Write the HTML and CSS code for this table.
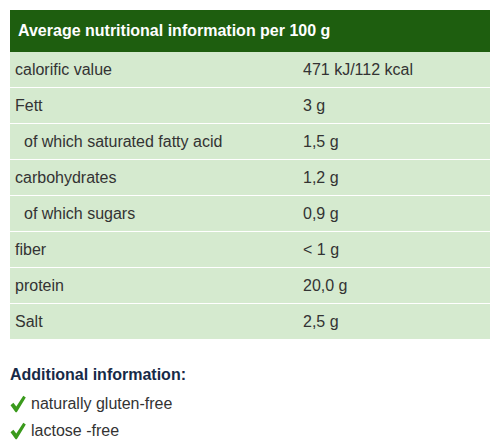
FILE: index.html
```html
<!DOCTYPE html>
<html lang="en">
<head>
    <meta charset="UTF-8">
    <meta name="viewport" content="width=device-width, initial-scale=1.0">
    <title>Nutritional information</title>
    <link rel="stylesheet" href="styles.css">
</head>
<body>
    <table class="nutrition">
        <thead>
            <tr><th colspan="2">Average nutritional information per 100 g</th></tr>
        </thead>
        <tbody>
            <tr><td class="label">calorific value</td><td>471 kJ/112 kcal</td></tr>
            <tr><td class="label">Fett</td><td>3 g</td></tr>
            <tr><td class="label sub">of which saturated fatty acid</td><td>1,5 g</td></tr>
            <tr><td class="label">carbohydrates</td><td>1,2 g</td></tr>
            <tr><td class="label sub">of which sugars</td><td>0,9 g</td></tr>
            <tr><td class="label">fiber</td><td>&lt; 1 g</td></tr>
            <tr><td class="label">protein</td><td>20,0 g</td></tr>
            <tr><td class="label">Salt</td><td>2,5 g</td></tr>
        </tbody>
    </table>

    <div class="extra">
        <h4>Additional information:</h4>
        <ul>
            <li>
                <svg class="check" viewBox="0 0 16 18"><path d="M0.5 10.2 L3.4 7.8 L6.3 11.6 L13.3 0.8 L15.8 2.6 L6.8 17.2 L5.6 17.2 Z" fill="#3a9a1c"/></svg>
                naturally gluten-free
            </li>
            <li>
                <svg class="check" viewBox="0 0 16 18"><path d="M0.5 10.2 L3.4 7.8 L6.3 11.6 L13.3 0.8 L15.8 2.6 L6.8 17.2 L5.6 17.2 Z" fill="#3a9a1c"/></svg>
                lactose -free
            </li>
        </ul>
    </div>
</body>
</html>
```

FILE: styles.css
```css
body {
    font-family: "Liberation Sans", Arial, sans-serif;
    margin: 0;
    padding: 10px;
    background: #ffffff;
    color: #333333;
}
.nutrition {
    width: 480px;
    border-collapse: collapse;
    font-size: 16px;
}
.nutrition th {
    background: #1e5e0f;
    color: #ffffff;
    text-align: left;
    font-size: 16px;
    font-weight: bold;
    height: 42px;
    padding: 0 8px;
}
.nutrition td {
    background: #d5eacf;
    height: 35px;
    padding: 0 5px;
    border-top: 1px solid #ffffff;
}
.nutrition tbody tr:first-child td {
    border-top: none;
}
.nutrition .label {
    width: 60%;
}
.nutrition .sub {
    padding-left: 14px;
}
.extra {
    margin-top: 27px;
}
.extra h4 {
    margin: 0 0 6px;
    font-size: 16px;
    color: #172a47;
}
.extra ul {
    list-style: none;
    margin: 0;
    padding: 0;
    font-size: 16px;
}
.extra li {
    display: flex;
    align-items: center;
    gap: 5px;
    height: 27px;
}
.check {
    width: 16px;
    height: 18px;
}
```
